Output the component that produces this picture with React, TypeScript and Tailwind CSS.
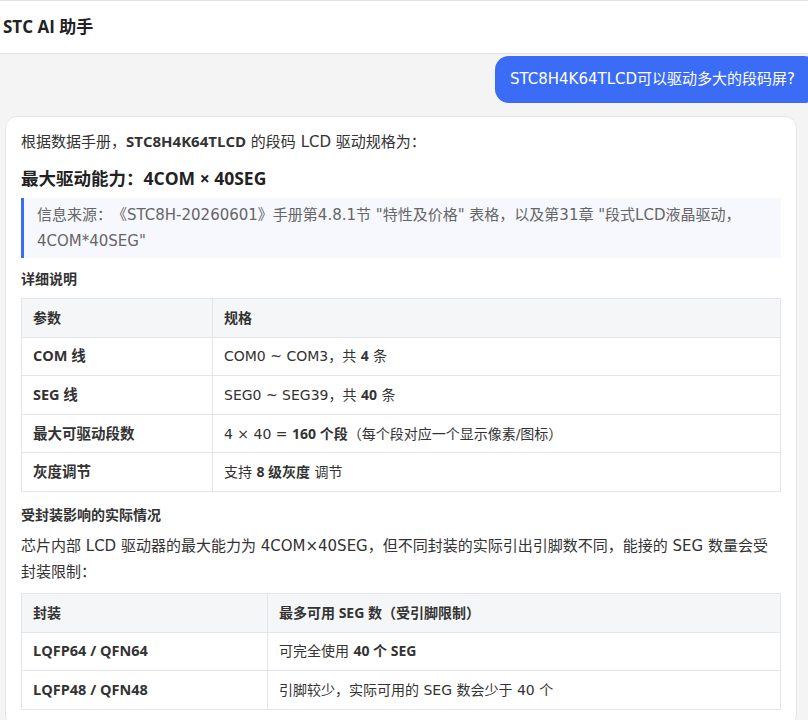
const specRows = [
  { name: 'COM 线', value: <>COM0 ~ COM3，共 <B>4</B> 条</> },
  { name: 'SEG 线', value: <>SEG0 ~ SEG39，共 <B>40</B> 条</> },
  {
    name: '最大可驱动段数',
    value: <>4 × 40 = <B>160 个段</B>（每个段对应一个显示像素/图标）</>,
  },
  { name: '灰度调节', value: <>支持 <B>8 级灰度</B> 调节</> },
];

const packageRows = [
  { name: 'LQFP64 / QFN64', value: <>可完全使用 <B>40 个 SEG</B></> },
  { name: 'LQFP48 / QFN48', value: <>引脚较少，实际可用的 SEG 数会少于 40 个</> },
];

// bold runs use a narrower latin face than body text
function B({ children }: { children: React.ReactNode }) {
  return <b className="font-[Open_Sans,Noto_Sans_CJK_SC,sans-serif] font-bold">{children}</b>;
}

const Table = ({
  head,
  rows,
  firstCol,
}: {
  head: [React.ReactNode, React.ReactNode];
  rows: { name: string; value: React.ReactNode }[];
  firstCol: string;
}) => (
  <table className="w-full border-collapse text-[14px] leading-[20px] text-[#333]">
    <thead>
      <tr className="bg-[#f5f6f7] font-[Open_Sans,Noto_Sans_CJK_SC,sans-serif]">
        <th className={`${firstCol} h-[38.6px] border border-[#e3e5e8] px-[11px] py-0 text-left font-bold`}>
          {head[0]}
        </th>
        <th className="h-[38.6px] border border-[#e3e5e8] px-[11px] py-0 text-left font-bold">{head[1]}</th>
      </tr>
    </thead>
    <tbody>
      {rows.map((r) => (
        <tr key={r.name}>
          <td className="h-[38.6px] border border-[#e3e5e8] px-[11px] py-0 font-[Open_Sans,Noto_Sans_CJK_SC,sans-serif] text-[14.5px] font-bold">
            {r.name}
          </td>
          <td className="h-[38.6px] border border-[#e3e5e8] px-[11px] py-0">{r.value}</td>
        </tr>
      ))}
    </tbody>
  </table>
);

export default function App() {
  return (
    <div className="min-h-screen overflow-hidden bg-[#f4f4f4] font-[DejaVu_Sans,Noto_Sans_CJK_SC,sans-serif] [text-spacing-trim:space-all]">
      <header className="flex h-[54px] items-center border-y border-[#e3e3e3] bg-white px-[3px] font-[Open_Sans,Noto_Sans_CJK_SC,sans-serif] text-[17px] font-bold text-[#222]">
        STC AI 助手
      </header>

      <div className="mt-[2px] flex justify-end">
        <div className="-mr-[10px] rounded-[14px] bg-[#3b6cf6] py-[12px] pr-[23px] pl-[15px] text-[15px] leading-[23px] text-white">
          STC8H4K64TLCD可以驱动多大的段码屏?
        </div>
      </div>

      <section className="mt-[13px] mr-[11px] ml-[5px] rounded-[12px] border border-[#e6e6e6] bg-white px-[15px] pt-[11px] pb-[16px] text-[15px] leading-[26px] text-[#333]">
        <p>
          根据数据手册，<B>STC8H4K64TLCD</B> 的段码 LCD 驱动规格为：
        </p>
        <h3 className="mt-[10px] font-[Open_Sans,Noto_Sans_CJK_SC,sans-serif] text-[17.5px] font-bold text-[#222]">
          最大驱动能力：4COM × 40SEG
        </h3>
        <blockquote className="mt-[7px] border-l-[3px] border-[#3b6cf6] bg-[#f6f8fd] py-[4px] pl-[13px] text-[#666]">
          信息来源：《STC8H-20260601》手册第4.8.1节 "特性及价格" 表格，以及第31章 "段式LCD液晶驱动，4COM*40SEG"
        </blockquote>
        <h4 className="mt-[8px] font-[Open_Sans,Noto_Sans_CJK_SC,sans-serif] text-[14px] font-bold">详细说明</h4>
        <div className="mt-[6px]">
          <Table head={['参数', '规格']} rows={specRows} firstCol="w-[191px]" />
        </div>
        <h4 className="mt-[10px] font-[Open_Sans,Noto_Sans_CJK_SC,sans-serif] text-[14px] font-bold">
          受封装影响的实际情况
        </h4>
        <p className="mt-[5px]">
          芯片内部 LCD 驱动器的最大能力为 4COM×40SEG，但不同封装的实际引出引脚数不同，能接的 SEG 数量会受封装限制：
        </p>
        <div className="mt-[8px]">
          <Table head={['封装', '最多可用 SEG 数（受引脚限制）']} rows={packageRows} firstCol="w-[246px]" />
        </div>
      </section>
    </div>
  );
}
